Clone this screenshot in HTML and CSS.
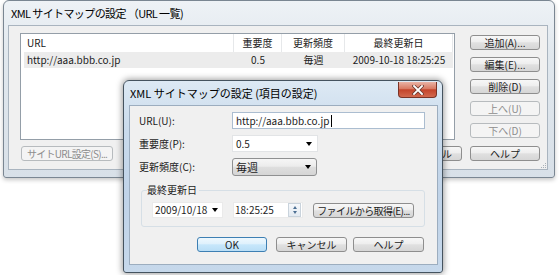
FILE: index.html
```html
<!DOCTYPE html>
<html lang="ja">
<head>
<meta charset="utf-8">
<title>XML サイトマップの設定</title>
<link rel="stylesheet" href="styles.css">
</head>
<body>
<div class="desk">
  <div class="win outer">
    <div class="titlebar outer-title">XML サイトマップの設定 （URL 一覧)</div>
    <div class="client outer-client">
      <div class="main-row">
        <div class="listview">
          <div class="lv-head">
            <div class="cell c1">URL</div>
            <div class="cell c2">重要度</div>
            <div class="cell c3">更新頻度</div>
            <div class="cell c4">最終更新日</div>
          </div>
          <div class="lv-row">
            <div class="cell r1">http://aaa.bbb.co.jp</div>
            <div class="cell c2">0.5</div>
            <div class="cell c3">毎週</div>
            <div class="cell c4">2009-10-18 18:25:25</div>
          </div>
        </div>
        <div class="side-btns">
          <div class="btn">追加(A)...</div>
          <div class="btn">編集(E)...</div>
          <div class="btn">削除(D)</div>
          <div class="btn disabled">上へ(U)</div>
          <div class="btn disabled">下へ(D)</div>
        </div>
      </div>
      <div class="bottom-row">
        <div class="btn disabled wide">サイトURL設定(S)...</div>
        <div class="btn-group">
          <div class="btn">OK</div>
          <div class="btn">キャンセル</div>
          <div class="btn">ヘルプ</div>
        </div>
      </div>
      <svg class="grip" width="7" height="7" viewBox="0 0 7 7">
        <rect x="5" y="1" width="1" height="1" fill="#a8b0b8"/>
        <rect x="3" y="3" width="1" height="1" fill="#a8b0b8"/>
        <rect x="5" y="3" width="1" height="1" fill="#a8b0b8"/>
        <rect x="1" y="5" width="1" height="1" fill="#a8b0b8"/>
        <rect x="3" y="5" width="1" height="1" fill="#a8b0b8"/>
        <rect x="5" y="5" width="1" height="1" fill="#a8b0b8"/>
      </svg>
    </div>
  </div>

  <div class="win dialog">
    <div class="titlebar">XML サイトマップの設定 (項目の設定)</div>
    <div class="close">
      <svg width="12" height="10" viewBox="0 0 12 10">
        <path d="M2 1 L10 9 M10 1 L2 9" stroke="#6a3a32" stroke-width="3.4" stroke-linecap="square"/>
        <path d="M2 1 L10 9 M10 1 L2 9" stroke="#ffffff" stroke-width="1.8" stroke-linecap="square"/>
      </svg>
    </div>
    <div class="client dlg-client">
      <div class="frow">
        <div class="flabel">URL(U):</div>
        <div class="textbox">http://aaa.bbb.co.jp<span class="caret"></span></div>
      </div>
      <div class="frow">
        <div class="flabel">重要度(P):</div>
        <div class="combo edit"><span>0.5</span><span class="arrow"></span></div>
      </div>
      <div class="frow tall">
        <div class="flabel">更新頻度(C):</div>
        <div class="combo list"><span class="combo-text">毎週</span><span class="arrow"></span></div>
      </div>
      <div class="group">
        <span class="legend">最終更新日</span>
        <div class="picker date"><span>2009/10/18</span><span class="arrow"></span></div>
        <div class="picker time">
          <span>18:25:25</span>
          <span class="spin"><span class="up"></span><span class="down"></span></span>
        </div>
        <div class="btn file">ファイルから取得(E)...</div>
      </div>
      <div class="dlg-actions">
        <div class="btn default ok">OK</div>
        <div class="btn cancel">キャンセル</div>
        <div class="btn help">ヘルプ</div>
      </div>
    </div>
  </div>
</div>
</body>
</html>
```

FILE: styles.css
```css
* {
  box-sizing: border-box;
  margin: 0;
  padding: 0;
}

body {
  margin: 0;
  width: 560px;
  height: 275px;
  overflow: hidden;
  background: #ffffff;
  font-family: "Noto Sans CJK JP", "Liberation Sans", sans-serif;
  font-size: 10px;
  line-height: 12px;
  color: #1c1c1c;
}

.desk {
  position: relative;
  width: 560px;
  height: 275px;
}

.win {
  position: absolute;
  display: flex;
  flex-direction: column;
}

.titlebar {
  height: 24px;
  display: flex;
  align-items: center;
  font-size: 11px;
  line-height: 14px;
  color: #000;
  white-space: nowrap;
}

/* ---------- outer window ---------- */
.outer {
  left: 3px;
  top: 0;
  width: 552px;
  height: 178px;
  border: 1px solid #7a8692;
  border-radius: 6px 6px 3px 3px;
  background: linear-gradient(#eef2f6, #e1e8ee 30%, #d8e0e8);
  box-shadow: 0 2px 4px rgba(0, 0, 0, 0.22);
}

.outer .titlebar {
  padding-left: 7px;
}

.outer-title {
  letter-spacing: -0.6px;
}

.client {
  background: #f0f0f0;
  position: relative;
}

.outer-client {
  margin-left: 4px;
  width: 540px;
  height: 145px;
  border: 1px solid #a9b4bf;
  padding: 7px 0 0 11px;
}

.main-row {
  display: flex;
  align-items: flex-start;
}

.listview {
  width: 435px;
  height: 107px;
  border: 1px solid #949ea8;
  background: #ffffff;
}

.lv-head,
.lv-row {
  display: flex;
}

.lv-head {
  height: 18px;
}

.lv-row {
  height: 16px;
}

.cell {
  display: flex;
  align-items: center;
  justify-content: center;
  white-space: nowrap;
}

.lv-head .cell {
  border-right: 1px solid #e6e8ea;
}

.c1 {
  width: 213px;
  justify-content: flex-start;
  padding-left: 6px;
}

.r1 {
  justify-content: flex-start;
  padding-left: 3px;
  margin-left: 3px;
  width: 210px;
}

.lv-row .cell {
  background: #ececec;
}

.c2 { width: 48px; }
.c3 { width: 63px; }
.c4 { width: 108px; }

.side-btns {
  margin-left: 15px;
  margin-top: 2px;
  display: flex;
  flex-direction: column;
  gap: 7px;
}

.btn {
  width: 70px;
  height: 15px;
  border: 1px solid #8e8e8e;
  border-radius: 3px;
  background: linear-gradient(#f7f7f7, #eeeeee 45%, #e0e0e0 52%, #d6d6d6);
  display: flex;
  align-items: center;
  justify-content: center;
  white-space: nowrap;
  color: #1c1c1c;
  line-height: 12px;
}

.btn.disabled {
  border-color: #b7bbbe;
  background: #f4f4f4;
  color: #8d8d8d;
}

.btn.default {
  border-color: #3d7fb3;
  background: linear-gradient(#eef8fe, #dff1fc 45%, #c7e7fb 52%, #b9def6);
}

.btn.wide {
  width: 92px;
  letter-spacing: -0.7px;
}

.bottom-row {
  margin: 6px 7px 0 1px;
  display: flex;
  justify-content: space-between;
}

.btn-group {
  display: flex;
  gap: 8px;
}

.grip {
  position: absolute;
  right: 0;
  bottom: 0;
}

/* ---------- dialog ---------- */
.dialog {
  left: 123px;
  top: 80px;
  width: 320px;
  height: 193px;
  border: 1px solid #45535f;
  border-radius: 6px 6px 3px 3px;
  background: linear-gradient(#dde9f4, #cadbec 25%, #c0d3e8 60%, #c6d8eb);
  box-shadow: 0 0 6px 1px rgba(0, 0, 0, 0.38);
}

.dialog .titlebar {
  padding-left: 6px;
}

.close {
  position: absolute;
  top: 1px;
  right: 5px;
  width: 39px;
  height: 16px;
  border: 1px solid #7a3326;
  border-top: none;
  border-radius: 0 0 4px 4px;
  background: linear-gradient(#eab3a5, #d97a63 45%, #c4442b 52%, #d2694f);
  display: flex;
  align-items: center;
  justify-content: center;
}

.dlg-client {
  margin-left: 5px;
  width: 309px;
  height: 160px;
  border: 1px solid #9cadbf;
  padding: 6px 0 0 9px;
}

.frow {
  display: flex;
  align-items: center;
  height: 17px;
}

.frow + .frow {
  margin-top: 6px;
}

.frow.tall {
  height: 18px;
}

.flabel {
  width: 93px;
  white-space: nowrap;
}

.textbox {
  width: 193px;
  height: 17px;
  border: 1px solid #abbdd0;
  background: #fff;
  display: flex;
  align-items: center;
  padding-left: 3px;
  white-space: nowrap;
}

.caret {
  display: inline-block;
  width: 1px;
  height: 12px;
  margin-left: 1px;
  background: #000;
}

.combo {
  width: 86px;
  height: 17px;
  display: flex;
  align-items: center;
  justify-content: space-between;
  padding: 0 5px 0 3px;
}

.combo.edit {
  background: #fff;
  border: 1px solid #e2e4e6;
}

.combo.list {
  height: 18px;
  width: 85px;
  border: 1px solid #8f9091;
  border-radius: 3px;
  background: linear-gradient(#f6f6f6, #ececec 45%, #dedede 52%, #d5d5d5);
}

.combo-text {
  font-size: 11px;
}

.arrow {
  width: 0;
  height: 0;
  border-left: 3px solid transparent;
  border-right: 3px solid transparent;
  border-top: 4px solid #000;
}

.group {
  position: relative;
  margin-top: 14px;
  margin-left: 2px;
  width: 284px;
  height: 37px;
  border: 1px solid #d6dfe6;
  border-radius: 3px;
  padding: 11px 0 0 10px;
  display: flex;
  align-items: flex-start;
}

.legend {
  position: absolute;
  top: -7px;
  left: 5px;
  background: #f0f0f0;
  line-height: 12px;
  padding-right: 2px;
}

.picker {
  height: 16px;
  background: #fff;
  border: 1px solid #eaeaea;
  display: flex;
  align-items: center;
  justify-content: space-between;
  white-space: nowrap;
}

.picker.date {
  width: 71px;
  padding: 0 4px 0 2px;
}

.picker.time {
  width: 70px;
  margin-left: 10px;
  padding: 0 1px 0 1px;
}

.spin {
  width: 13px;
  height: 14px;
  border: 1px solid #c9d3dc;
  background: linear-gradient(#f5f8fb, #e3eaf1);
  display: flex;
  flex-direction: column;
  align-items: center;
  justify-content: space-around;
  padding: 1px 0;
}

.spin .up {
  width: 0;
  height: 0;
  border-left: 2px solid transparent;
  border-right: 2px solid transparent;
  border-bottom: 3px solid #4d6f93;
}

.spin .down {
  width: 0;
  height: 0;
  border-left: 2px solid transparent;
  border-right: 2px solid transparent;
  border-top: 3px solid #4d6f93;
}

.btn.file {
  width: 101px;
  margin-left: 10px;
  margin-top: 1px;
  letter-spacing: -0.6px;
}

.dlg-actions {
  margin-top: 10px;
  margin-right: 13px;
  display: flex;
  justify-content: flex-end;
}

.btn.ok {
  width: 70px;
  margin-right: 9px;
}

.btn.cancel {
  width: 71px;
  margin-right: 6px;
}

.btn.help {
  width: 71px;
}
```
